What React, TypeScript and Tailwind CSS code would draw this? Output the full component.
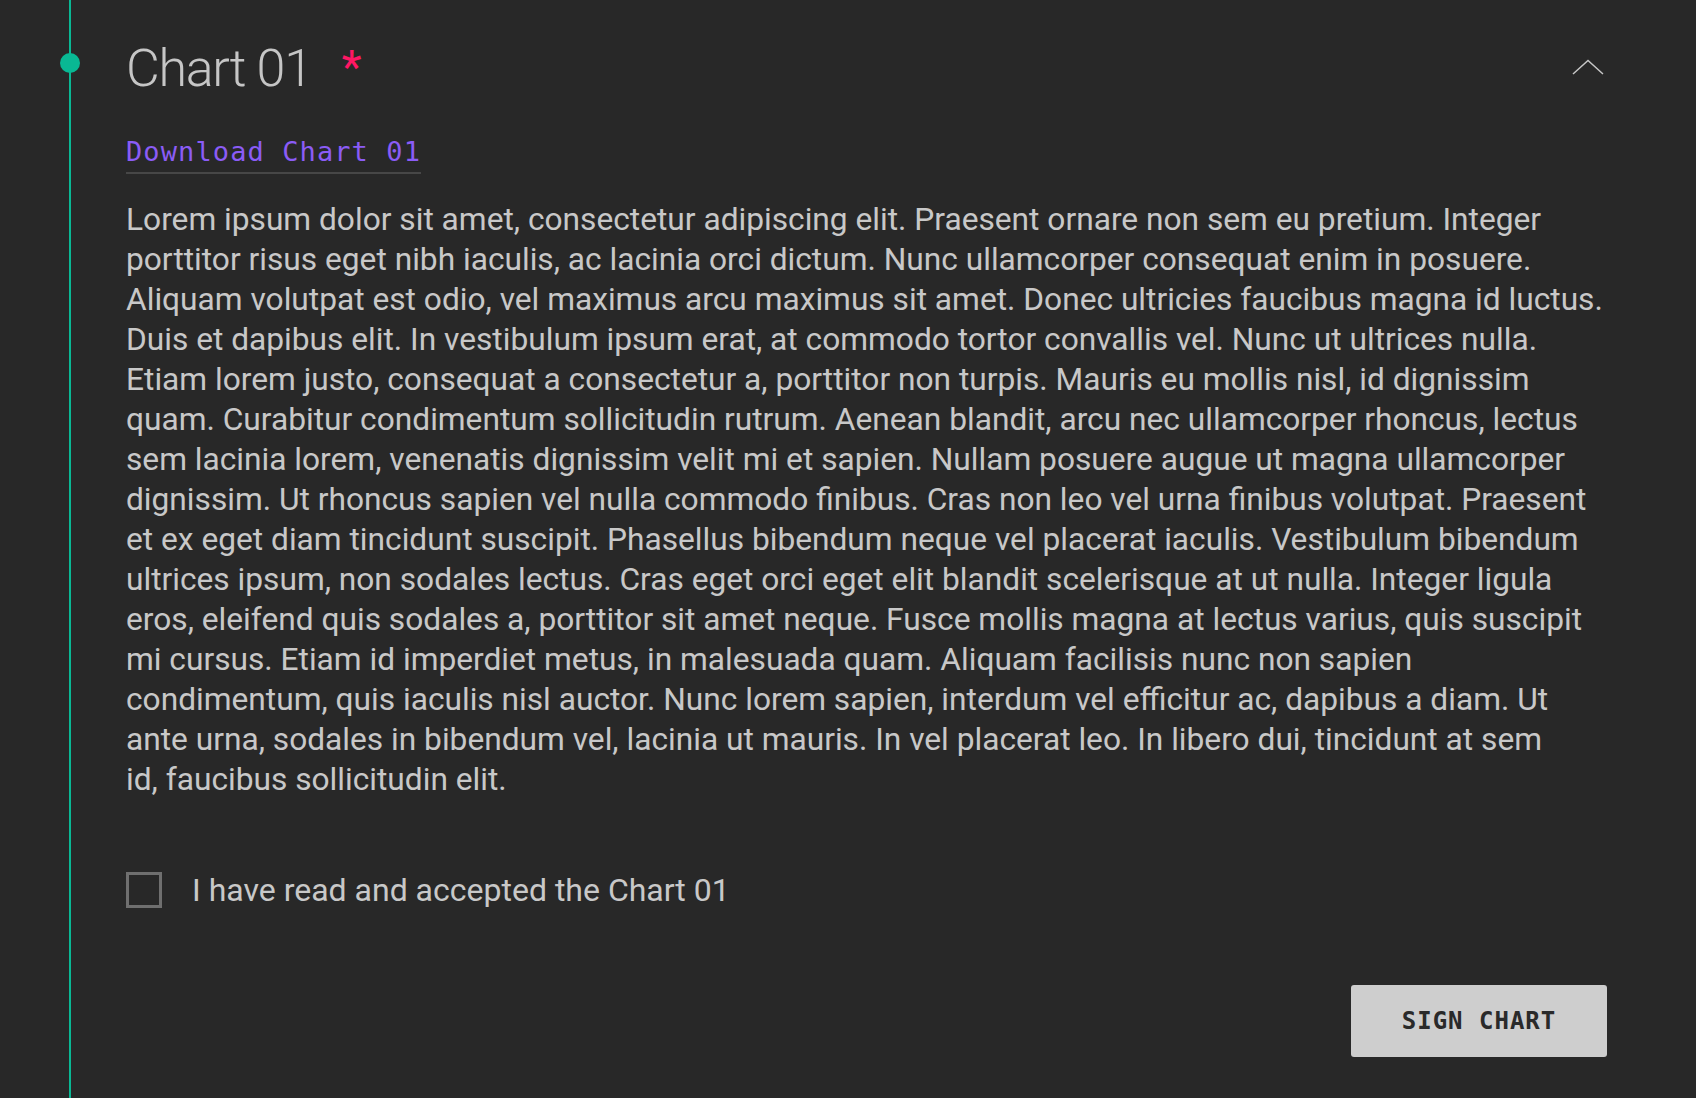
import React from "react";

const lines = [
  "Lorem ipsum dolor sit amet, consectetur adipiscing elit. Praesent ornare non sem eu pretium. Integer",
  "porttitor risus eget nibh iaculis, ac lacinia orci dictum. Nunc ullamcorper consequat enim in posuere.",
  "Aliquam volutpat est odio, vel maximus arcu maximus sit amet. Donec ultricies faucibus magna id luctus.",
  "Duis et dapibus elit. In vestibulum ipsum erat, at commodo tortor convallis vel. Nunc ut ultrices nulla.",
  "Etiam lorem justo, consequat a consectetur a, porttitor non turpis. Mauris eu mollis nisl, id dignissim",
  "quam. Curabitur condimentum sollicitudin rutrum. Aenean blandit, arcu nec ullamcorper rhoncus, lectus",
  "sem lacinia lorem, venenatis dignissim velit mi et sapien. Nullam posuere augue ut magna ullamcorper",
  "dignissim. Ut rhoncus sapien vel nulla commodo finibus. Cras non leo vel urna finibus volutpat. Praesent",
  "et ex eget diam tincidunt suscipit. Phasellus bibendum neque vel placerat iaculis. Vestibulum bibendum",
  "ultrices ipsum, non sodales lectus. Cras eget orci eget elit blandit scelerisque at ut nulla. Integer ligula",
  "eros, eleifend quis sodales a, porttitor sit amet neque. Fusce mollis magna at lectus varius, quis suscipit",
  "mi cursus. Etiam id imperdiet metus, in malesuada quam. Aliquam facilisis nunc non sapien",
  "condimentum, quis iaculis nisl auctor. Nunc lorem sapien, interdum vel efficitur ac, dapibus a diam. Ut",
  "ante urna, sodales in bibendum vel, lacinia ut mauris. In vel placerat leo. In libero dui, tincidunt at sem",
  "id, faucibus sollicitudin elit.",
];

export default function App() {
  return (
    <div className="flex h-[1098px] w-[1696px] overflow-hidden bg-[#282828] font-['Roboto',sans-serif] text-[#c6c6c6]">
      <div className="relative ml-[69px] w-[2px] shrink-0 bg-[#09b894]">
        <div className="absolute left-[-9px] top-[53px] h-[20px] w-[20px] rounded-full bg-[#09b894]" />
      </div>
      <div className="ml-[55px] flex w-[1481px] flex-col">
        <div className="flex items-start justify-between pt-[41px]">
          <div className="flex items-start pt-[2px]">
            <span className="text-[52px] font-light leading-none tracking-[-1.3px]">Chart 01</span>
            <span className="ml-[30px] mt-[1px] text-[46px] leading-none text-[#ff1764]">*</span>
          </div>
          <svg className="mr-[3px] mt-[18px]" width="32" height="16" viewBox="0 0 32 16" fill="none">
            <path d="M1 15 L16 1.5 L31 15" stroke="#c6c6c6" strokeWidth="1.5" />
          </svg>
        </div>
        <div className="mt-[43px]">
          <span className="inline-block border-b-2 border-[#474747] pb-[7px] font-['DejaVu_Sans_Mono',monospace] text-[27px] leading-none tracking-[1.1px] text-[#8b5cf6]">
            Download Chart 01
          </span>
        </div>
        <div className="mt-[26px] text-[31.7px] leading-[40px] text-[#c8c8c8]">
          {lines.map((l, i) => (
            <div key={i} className="whitespace-nowrap">
              {l}
            </div>
          ))}
        </div>
        <div className="mt-[70px] flex items-center gap-[30px]">
          <div className="h-[36px] w-[36px] border-[3px] border-[#6f6f6f]" />
          <span className="text-[32px] leading-[40px] text-[#c8c8c8]">I have read and accepted the Chart 01</span>
        </div>
        <div className="mt-[75px] flex justify-end">
          <button className="flex h-[72px] w-[256px] items-center justify-center rounded-[3px] bg-[#cecece] font-['DejaVu_Sans_Mono',monospace] text-[24px] font-semibold tracking-[1px] text-[#2a2a2a]">
            SIGN CHART
          </button>
        </div>
      </div>
    </div>
  );
}
